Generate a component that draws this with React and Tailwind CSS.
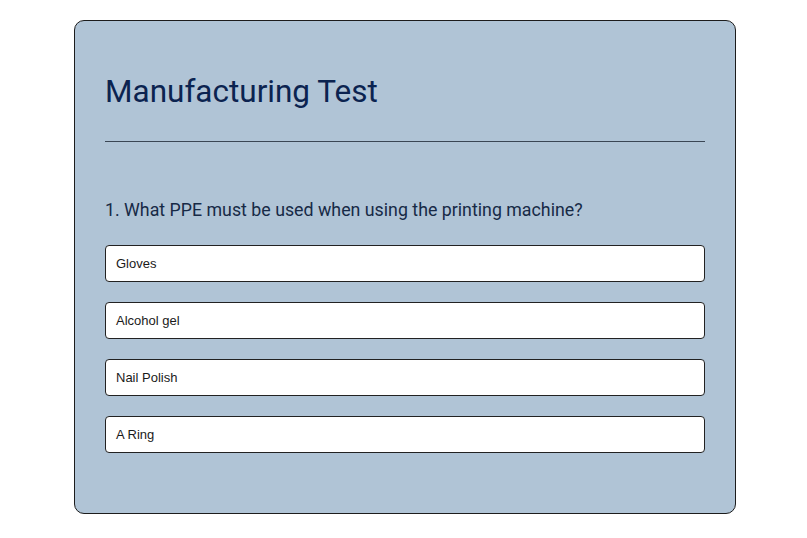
export default function App() {
  const options = ["Gloves", "Alcohol gel", "Nail Polish", "A Ring"];
  return (
    <div className="min-h-screen bg-white pt-[20px] pb-[24px]">
      <div className="ml-[74px] w-[662px] h-[494px] rounded-[10px] border border-[#1c1c1c] bg-[#b0c4d6] px-[30px] pt-[52px]">
        <h1 className="font-['Roboto',sans-serif] text-[31.5px] leading-[38px] text-[#0b2350]">
          Manufacturing Test
        </h1>
        <hr className="mt-[30px] border-0 border-t border-[#3a4654]" />
        <p className="mt-[57px] font-['Roboto',sans-serif] text-[17.8px] leading-[22px] text-[#172a46]">
          1. What PPE must be used when using the printing machine?
        </p>
        <div className="mt-[24px] flex flex-col gap-[20px]">
          {options.map((o) => (
            <div
              key={o}
              className="h-[37px] rounded-[4px] border border-[#222] bg-white px-[10px] flex items-center font-['Liberation_Sans',Arial,sans-serif] text-[13px] text-[#1a1a1a]"
            >
              {o}
            </div>
          ))}
        </div>
      </div>
    </div>
  );
}
